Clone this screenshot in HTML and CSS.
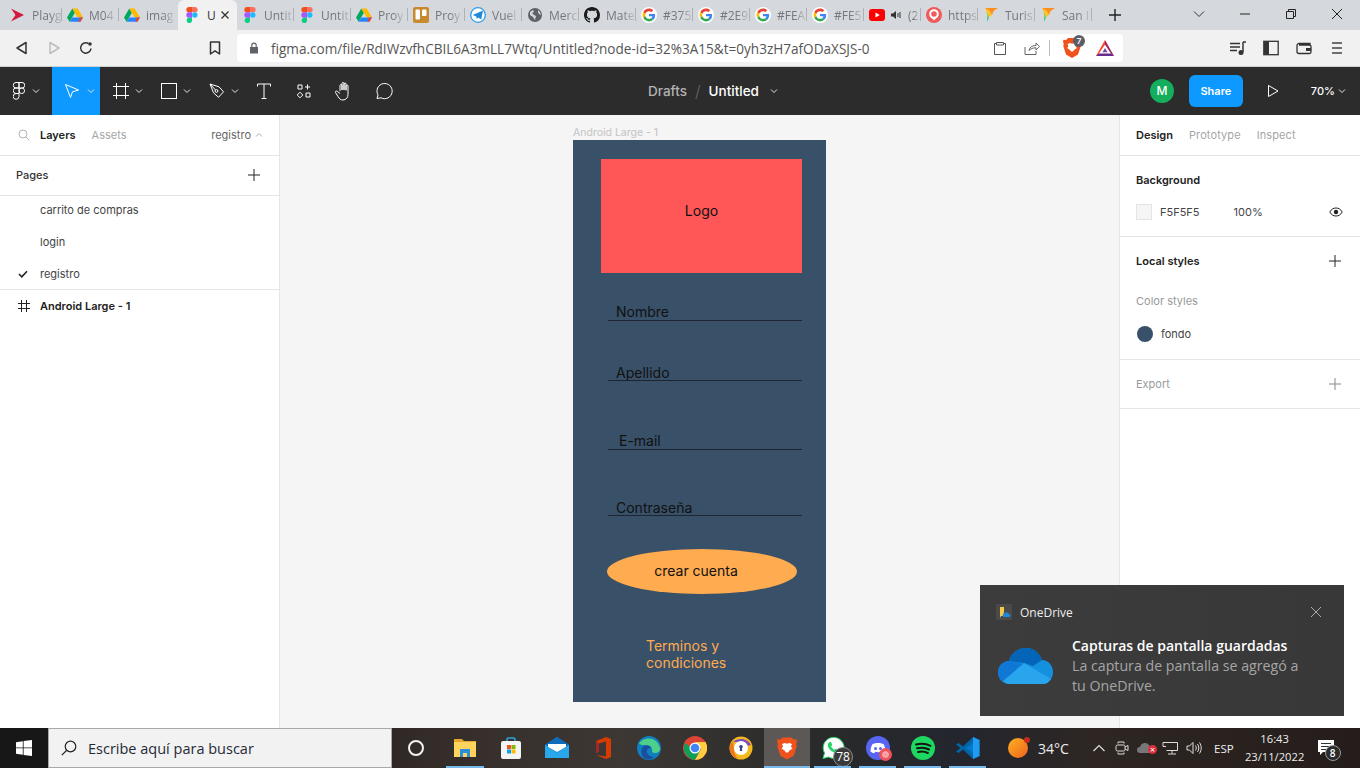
FILE: index.html
```html
<!DOCTYPE html>
<html lang="en">
<head>
    <meta charset="UTF-8">
    <meta name="viewport" content="width=device-width, initial-scale=1.0">
    <title>Untitled - Figma</title>
    <link rel="stylesheet" href="styles.css">
</head>
<body>
    <svg class="sprites" aria-hidden="true">
        <symbol id="fav-drive" viewBox="0 0 16 16">
            <path fill="#00a85d" d="M5.3 1.5 0 10.6l2.6 4.2 5.3-9z"/>
            <path fill="#ffba00" d="M5.3 1.5h5.4l5.3 9.1h-5.3z"/>
            <path fill="#2684fc" d="M2.6 14.8h10.8l2.6-4.2H5.3z"/>
            <path fill="#ea4335" d="M13.4 14.8l2.6-4.2h-3.4l-1 4.2z"/>
        </symbol>
        <symbol id="fav-figma" viewBox="0 0 12 16">
            <path fill="#f24e1e" d="M3 0h3v5.3H3A2.65 2.65 0 0 1 3 0z"/>
            <path fill="#ff7262" d="M6 0h3a2.65 2.65 0 0 1 0 5.3H6z"/>
            <path fill="#a259ff" d="M3 5.3h3v5.4H3a2.7 2.7 0 0 1 0-5.4z"/>
            <circle fill="#1abcfe" cx="8.8" cy="8" r="2.7"/>
            <path fill="#0acf83" d="M3 10.7h3v2.6a2.7 2.7 0 1 1-3-2.6z"/>
        </symbol>
        <symbol id="fav-google" viewBox="-6 -6 60 60">
            <circle cx="24" cy="24" r="30" fill="#fff"/>
            <path fill="#EA4335" d="M24 9.5c3.54 0 6.71 1.22 9.21 3.6l6.85-6.85C35.9 2.38 30.47 0 24 0 14.62 0 6.51 5.38 2.56 13.22l7.98 6.19C12.43 13.72 17.74 9.5 24 9.5z"/>
            <path fill="#4285F4" d="M46.98 24.55c0-1.57-.15-3.09-.38-4.55H24v9.02h12.94c-.58 2.96-2.26 5.48-4.78 7.18l7.73 6c4.51-4.18 7.09-10.36 7.09-17.65z"/>
            <path fill="#FBBC05" d="M10.53 28.59c-.48-1.45-.76-2.99-.76-4.59s.27-3.14.76-4.59l-7.98-6.19C.92 16.46 0 20.12 0 24c0 3.88.92 7.54 2.56 10.78l7.97-6.19z"/>
            <path fill="#34A853" d="M24 48c6.48 0 11.93-2.13 15.89-5.81l-7.73-6c-2.15 1.45-4.92 2.3-8.16 2.3-6.26 0-11.57-4.22-13.47-9.91l-7.98 6.19C6.51 42.62 14.62 48 24 48z"/>
        </symbol>
        <symbol id="fav-flag" viewBox="0 0 16 16">
            <path fill="#ff8f1c" d="M2 1h13l-4.500 3L9 8 6.500 4z"/>
            <path fill="#ffc21c" d="M2 1l4.500 3L9 8l-3 2z"/>
            <path fill="#7ac943" d="M3.500 5 6 10l-1 3z"/>
            <path fill="#1cc7b8" d="M4 10l1.500 1L4.500 15z"/>
        </symbol>
        <symbol id="ic-chevron" viewBox="0 0 8 8">
            <path d="M1 2.5 4 5.5 7 2.5" fill="none" stroke="currentColor"/>
        </symbol>
        <symbol id="ic-plus" viewBox="0 0 12 12">
            <path d="M6 0v12M0 6h12" fill="none" stroke="currentColor"/>
        </symbol>
        <symbol id="ic-brave" viewBox="0 0 18 20">
            <path fill="#f1511b" d="M5 0h8l2 2 2.5-.3L18 3.500l-.8 2.500.6 2-2.800 8.500L9 20l-6-3.500L.3 8l.5-2L0 3.500.5 1.700 3 2z"/>
            <path fill="#fff" d="M4.500 6 7 5l2 .8L11 5l2.500 1-1 2.500 1.500 1.500-3 2-1 1.500h-2l-1-1.500-3-2 1.500-1.500z"/>
        </symbol>
    </svg>

    <div class="tabstrip">
        <div class="tab"><svg class="fav" viewBox="0 0 16 16"><path fill="#d6193f" d="M1 1.500 14 8 1 14.500 5.500 8z"/></svg><span class="tab-title">Playg</span></div>
        <div class="tab"><svg class="fav"><use href="#fav-drive"/></svg><span class="tab-title">M04</span></div>
        <div class="tab no-sep"><svg class="fav"><use href="#fav-drive"/></svg><span class="tab-title">imag</span></div>
        <div class="tab active no-sep"><svg class="fav"><use href="#fav-figma"/></svg><span class="tab-title">U</span><svg class="tab-close" viewBox="0 0 8 8"><path d="M.5.5l7 7M7.500.5l-7 7" fill="none" stroke="#333" stroke-width="1.300"/></svg></div>
        <div class="tab"><svg class="fav"><use href="#fav-figma"/></svg><span class="tab-title">Untit</span></div>
        <div class="tab"><svg class="fav"><use href="#fav-figma"/></svg><span class="tab-title">Untit</span></div>
        <div class="tab"><svg class="fav"><use href="#fav-drive"/></svg><span class="tab-title">Proy</span></div>
        <div class="tab"><svg class="fav" viewBox="0 0 16 16"><rect width="16" height="16" rx="2" fill="#c98a2e"/><rect x="2.500" y="2.500" width="4.500" height="10" rx="1" fill="#fff"/><rect x="9" y="2.500" width="4.500" height="6.500" rx="1" fill="#fff"/></svg><span class="tab-title">Proy</span></div>
        <div class="tab"><svg class="fav" viewBox="0 0 16 16"><circle cx="8" cy="8" r="7.300" fill="#fff" stroke="#2d9be8" stroke-width="1.300"/><path fill="#1e88d9" d="M2.800 8 13 3.600 11.200 12.500 8.200 10.400 6.800 12 6.300 9.500z"/></svg><span class="tab-title">Vuel</span></div>
        <div class="tab"><svg class="fav" viewBox="0 0 16 16"><circle cx="8" cy="8" r="7" fill="#5f6368"/><path fill="#d5d9dd" d="M3 5l3-2 1 2-2 1 2 2 2 1-1 4-2-3-3-2zM11 3l2 2 1 3-2-1-1-2z"/></svg><span class="tab-title">Merc</span></div>
        <div class="tab"><svg class="fav" viewBox="0 0 16 16"><path fill="#1a1a1a" d="M8 0C3.580 0 0 3.580 0 8c0 3.540 2.290 6.530 5.470 7.590.4.070.55-.17.55-.38 0-.19-.01-.82-.01-1.490-2.010.37-2.530-.49-2.690-.94-.09-.23-.48-.94-.82-1.130-.28-.15-.68-.52-.01-.53.630-.01 1.080.58 1.230.82.720 1.210 1.870.87 2.330.66.070-.52.280-.87.510-1.070-1.780-.2-3.640-.89-3.640-3.950 0-.87.310-1.590.820-2.150-.08-.2-.36-1.020.08-2.120 0 0 .67-.21 2.200.82.640-.18 1.320-.27 2-.27.680 0 1.360.09 2 .27 1.530-1.040 2.200-.82 2.200-.82.440 1.100.160 1.920.080 2.120.510.56.820 1.270.820 2.150 0 3.070-1.870 3.750-3.650 3.950.29.25.54.73.54 1.480 0 1.070-.01 1.930-.01 2.200 0 .21.15.46.55.38A8.013 8.013 0 0 0 16 8c0-4.420-3.580-8-8-8z"/></svg><span class="tab-title">Mate</span></div>
        <div class="tab"><svg class="fav"><use href="#fav-google"/></svg><span class="tab-title">#375</span></div>
        <div class="tab"><svg class="fav"><use href="#fav-google"/></svg><span class="tab-title">#2E9</span></div>
        <div class="tab"><svg class="fav"><use href="#fav-google"/></svg><span class="tab-title">#FEA</span></div>
        <div class="tab"><svg class="fav"><use href="#fav-google"/></svg><span class="tab-title">#FE5</span></div>
        <div class="tab tab-audio"><svg class="fav" viewBox="0 0 16 16"><rect y="2" width="16" height="12" rx="3" fill="#f00"/><path fill="#fff" d="M6.500 5.500 10.800 8l-4.300 2.500z"/></svg><svg class="tab-sound" viewBox="0 0 10 10"><path fill="#333" d="M0 3.500h2L5 1v8L2 6.500H0zM6.500 3h1v4h-1zM8.500 2h1v6h-1z"/></svg><span class="tab-title">(2</span></div>
        <div class="tab"><svg class="fav" viewBox="0 0 16 16"><circle cx="8" cy="8" r="8" fill="#ef5a5a"/><circle cx="8" cy="7" r="3.800" fill="none" stroke="#fff" stroke-width="2"/><path fill="#fff" d="M5.500 10.500h5L8 13.500z"/></svg><span class="tab-title">https</span></div>
        <div class="tab"><svg class="fav"><use href="#fav-flag"/></svg><span class="tab-title">Turis</span></div>
        <div class="tab"><svg class="fav"><use href="#fav-flag"/></svg><span class="tab-title">San I</span></div>
        <svg class="new-tab" viewBox="0 0 12 12"><path d="M6 0v12M0 6h12" fill="none" stroke="#222" stroke-width="1.400"/></svg>
        <div class="win-controls">
            <svg class="win-btn" viewBox="0 0 12 12"><path d="M1 3.500 6 8.500 11 3.500" fill="none" stroke="#333"/></svg>
            <svg class="win-btn" viewBox="0 0 12 12"><path d="M1 6h10" fill="none" stroke="#222"/></svg>
            <svg class="win-btn" viewBox="0 0 12 12"><path d="M1.500 3.500h7v7h-7zM3.500 3.500v-2h7v7h-2" fill="none" stroke="#222"/></svg>
            <svg class="win-btn" viewBox="0 0 12 12"><path d="M1 1l10 10M11 1 1 11" fill="none" stroke="#222"/></svg>
        </div>
    </div>

    <div class="addressbar">
        <svg class="nav-btn" viewBox="0 0 16 16"><path d="M12 2.500v11L3 8z" fill="none" stroke="#333" stroke-width="1.500" stroke-linejoin="round"/></svg>
        <svg class="nav-btn" viewBox="0 0 16 16"><path d="M4 2.500v11L13 8z" fill="none" stroke="#bdbdbd" stroke-width="1.500" stroke-linejoin="round"/></svg>
        <svg class="nav-btn" viewBox="0 0 16 16"><path d="M13 8.500A5.200 5.200 0 1 1 10.500 3.500" fill="none" stroke="#333" stroke-width="1.500"/><circle cx="12" cy="4" r="1.800" fill="#333"/></svg>
        <svg class="nav-btn bookmark-btn" viewBox="0 0 16 16"><path d="M3.500 2h9v12L8 10.800 3.500 14z" fill="none" stroke="#333" stroke-width="1.500" stroke-linejoin="round"/></svg>
        <div class="url-box">
            <svg class="lock" viewBox="0 0 10 12"><path fill="#5f6368" d="M1 5h8v6.500H1z"/><path d="M2.800 5V3.300a2.200 2.200 0 0 1 4.400 0V5" fill="none" stroke="#5f6368" stroke-width="1.200"/></svg>
            <span class="url">figma.com/file/RdIWzvfhCBIL6A3mLL7Wtq/Untitled?node-id=32%3A15&amp;t=0yh3zH7afODaXSJS-0</span>
            <svg class="url-ic" viewBox="0 0 14 14"><path d="M3.500 2.500H1.500v11h11v-11h-2M3.500 1.500h7v2.500h-7z" fill="none" stroke="#555"/></svg>
            <svg class="url-ic url-share" viewBox="0 0 16 14"><path d="M1 6v7.500h11V10M5 9.500c.5-3.500 3.500-5 7-5V2l3.500 3.500L12 9V6.800c-3 0-5 .8-7 2.700z" fill="none" stroke="#666"/></svg>
            <span class="url-sep"></span>
            <span class="shield"><svg class="shield-ic"><use href="#ic-brave"/></svg><span class="shield-count">7</span></span>
            <svg class="bat" viewBox="0 0 18 16"><path fill="#662d91" d="M0 16h18l-1.800-2.600H1.800z"/><path fill="#ff4724" d="M9 0 0 16l3-2.600L9 4.500z"/><path fill="#9e1f63" d="M9 0l9 16-3-2.600L9 4.500z"/><path fill="#662d91" d="M9 8l-2.500 4.200h5z" opacity=".9"/></svg>
        </div>
        <div class="browser-tools">
            <svg class="nav-btn" viewBox="0 0 18 16"><path d="M1 3.500h10M1 7h10M1 10.500h7" stroke="#333" stroke-width="1.500" fill="none"/><path d="M14 2v10" stroke="#333" stroke-width="1.500"/><path d="M14 2h3" stroke="#333" stroke-width="1.500"/><circle cx="12" cy="12.500" r="2.500" fill="#333"/></svg>
            <svg class="nav-btn" viewBox="0 0 16 16"><rect x=".8" y="1.300" width="14.400" height="13.400" fill="none" stroke="#333" stroke-width="1.300"/><rect x="1" y="1.500" width="5" height="13" fill="#333"/></svg>
            <svg class="nav-btn" viewBox="0 0 16 16"><path d="M14 5V3.500H3A2 2 0 0 0 1 5.500v6a2 2 0 0 0 2 2h10.500A1.500 1.500 0 0 0 15 12V6.500A1.500 1.500 0 0 0 13.500 5H3" fill="none" stroke="#333" stroke-width="1.300"/><rect x="10" y="8" width="5" height="3" fill="#333"/></svg>
            <svg class="nav-btn" viewBox="0 0 16 16"><path d="M3 3h10M3 8h10M3 13h10" stroke="#444" stroke-width="1.600"/></svg>
        </div>
    </div>

    <div class="toolbar">
        <div class="tool tool-logo">
            <svg class="tool-ic logo-ic" viewBox="0 0 12 18"><path d="M3 .5h3v5.500H3A2.750 2.750 0 0 1 3 .5zM6 .5h3a2.750 2.750 0 0 1 0 5.500H6zM3 6h3v5.500H3A2.750 2.750 0 0 1 3 6zM3 11.500h3v3A2.900 2.900 0 1 1 3 11.500z" fill="none" stroke="#fff"/><circle cx="8.800" cy="8.750" r="2.750" fill="none" stroke="#fff"/></svg>
            <svg class="chev"><use href="#ic-chevron"/></svg>
        </div>
        <div class="tool tool-active">
            <svg class="tool-ic" viewBox="0 0 16 16"><path d="M1.500 1.500 14.500 7 8.500 8.800 6.500 14.500z" fill="none" stroke="#fff"/></svg>
            <svg class="chev"><use href="#ic-chevron"/></svg>
        </div>
        <div class="tool">
            <svg class="tool-ic" viewBox="0 0 16 16"><path d="M3.500 0v16M12.500 0v16M0 3.500h16M0 12.500h16" fill="none" stroke="#fff"/></svg>
            <svg class="chev"><use href="#ic-chevron"/></svg>
        </div>
        <div class="tool">
            <svg class="tool-ic" viewBox="0 0 16 16"><rect x=".5" y=".5" width="15" height="15" fill="none" stroke="#fff"/></svg>
            <svg class="chev"><use href="#ic-chevron"/></svg>
        </div>
        <div class="tool">
            <svg class="tool-ic" viewBox="0 0 16 16"><path d="M1 1l9 2.800 4.500 5-5 5.500-5-4.500zM1 1l5.500 6" fill="none" stroke="#fff"/><circle cx="7.500" cy="8" r="1.400" fill="none" stroke="#fff"/></svg>
            <svg class="chev"><use href="#ic-chevron"/></svg>
        </div>
        <svg class="tool-single" viewBox="0 0 16 16"><path d="M1.500 3.500V1h13v2.500M8 1v14.500M5.500 15.500h5" fill="none" stroke="#fff"/></svg>
        <svg class="tool-single" viewBox="0 0 16 16"><path d="M2 2h4v4H2zM11.500 1.500v5M9 4h5M10 10h4v4h-4zM4 9.200 6.800 12 4 14.800 1.200 12z" fill="none" stroke="#fff"/></svg>
        <svg class="tool-single hand-ic" viewBox="0 0 20 20"><path d="M6 10V4.500a1 1 0 0 1 2 0V9M8 9V2.500a1 1 0 0 1 2 0V9M10 9V3a1 1 0 0 1 2 0v6M12 9.500V5a1 1 0 0 1 2 0v8.500c0 3-2 5.500-5 5.500-2.500 0-3.500-1-5-3.500L1.500 11.500c-.6-1 .8-2 1.700-1.200L6 12.500" fill="none" stroke="#fff"/></svg>
        <svg class="tool-single comment-ic" viewBox="0 0 20 20"><path d="M3 17.500l1-3.600A7.600 7.600 0 1 1 7 16.800z" fill="none" stroke="#fff"/></svg>
        <div class="doc-title">
            <span class="doc-folder">Drafts</span>
            <span class="doc-slash">/</span>
            <span class="doc-name">Untitled</span>
            <svg class="chev"><use href="#ic-chevron"/></svg>
        </div>
        <div class="toolbar-right">
            <span class="avatar">M</span>
            <button class="share-btn">Share</button>
            <svg class="play-ic" viewBox="0 0 12 14"><path d="M1.500 1.500v11L11 7z" fill="none" stroke="#fff"/></svg>
            <span class="zoom-level">70%</span>
            <svg class="chev"><use href="#ic-chevron"/></svg>
        </div>
    </div>

    <div class="workspace">
        <aside class="left-panel">
            <div class="panel-tabs">
                <svg class="search-ic" viewBox="0 0 12 12"><circle cx="5" cy="5" r="4" fill="none" stroke="#b3b3b3"/><path d="M8 8l3.500 3.500" stroke="#b3b3b3"/></svg>
                <span class="tab-on">Layers</span>
                <span class="tab-off">Assets</span>
                <span class="page-picker">registro</span>
                <svg class="picker-chev" viewBox="0 0 8 8"><path d="M1 5.500 4 2.500 7 5.500" fill="none" stroke="#aaa"/></svg>
            </div>
            <div class="pages-head">
                <span>Pages</span>
                <svg class="plus"><use href="#ic-plus"/></svg>
            </div>
            <ul class="page-list">
                <li>carrito de compras</li>
                <li>login</li>
                <li class="page-current"><svg class="check" viewBox="0 0 10 8"><path d="M1 4l2.800 2.800L9 1.200" fill="none" stroke="#222" stroke-width="1.600"/></svg>registro</li>
            </ul>
            <div class="layer-row">
                <svg class="layer-ic" viewBox="0 0 12 12"><path d="M3.500 0v12M8.500 0v12M0 3.500h12M0 8.500h12" fill="none" stroke="#222"/></svg>
                Android Large - 1
            </div>
        </aside>

        <main class="canvas">
            <div class="frame-label">Android Large - 1</div>
            <div class="frame">
                <div class="logo-box">Logo</div>
                <div class="field field-nombre"><span>Nombre</span></div>
                <div class="field field-apellido"><span>Apellido</span></div>
                <div class="field field-email"><span>E-mail</span></div>
                <div class="field field-pass"><span>Contraseña</span></div>
                <div class="create-btn"><span>crear cuenta</span></div>
                <div class="terms">Terminos y<br>condiciones</div>
            </div>
        </main>

        <aside class="right-panel">
            <div class="design-tabs">
                <span class="tab-on">Design</span>
                <span class="tab-off">Prototype</span>
                <span class="tab-off">Inspect</span>
            </div>
            <section class="section section-bg">
                <h3>Background</h3>
                <div class="bg-row">
                    <span class="swatch"></span>
                    <span class="bg-hex">F5F5F5</span>
                    <span class="bg-pct">100%</span>
                    <svg class="eye" viewBox="0 0 14 10"><path d="M.8 5C2.500 2 4.500 1 7 1s4.500 1 6.200 4C11.500 8 9.500 9 7 9S2.500 8 .8 5z" fill="none" stroke="#222"/><circle cx="7" cy="5" r="2.200" fill="#222"/></svg>
                </div>
            </section>
            <section class="section section-styles">
                <div class="section-head">
                    <h3>Local styles</h3>
                    <svg class="plus"><use href="#ic-plus"/></svg>
                </div>
                <div class="muted-label">Color styles</div>
                <div class="style-row"><span class="style-dot"></span>fondo</div>
            </section>
            <section class="section section-export">
                <span class="muted-label">Export</span>
                <svg class="plus plus-muted"><use href="#ic-plus"/></svg>
            </section>
        </aside>
    </div>

    <div class="taskbar">
        <div class="start-btn"><svg class="start-ic" viewBox="0 0 16 16"><path fill="#fff" d="M0 2.200 6.800 1.200V7.500H0zM7.600 1.100 16 0v7.500H7.600zM0 8.300h6.800v6.500L0 13.800zM7.600 8.300H16V16l-8.400-1.100z"/></svg></div>
        <div class="search-box">
            <svg class="task-search-ic" viewBox="0 0 16 16"><circle cx="9.500" cy="6.500" r="5.300" fill="none" stroke="#222" stroke-width="1.200"/><path d="M5.500 10.500 .8 15.200" stroke="#222" stroke-width="1.200"/></svg>
            <span>Escribe aquí para buscar</span>
        </div>
        <div class="cortana"><span class="cortana-ring"></span></div>
        <div class="task-item running"><svg class="app-ic" viewBox="0 0 24 24"><path fill="#e8a62b" d="M1 3h8l2 2h12v3H1z"/><path fill="#ffd45e" d="M1 6h22v15H1z"/><path fill="#2a8fd8" d="M7 13h10v8h-3v-4h-4v4H7z"/></svg></div>
        <div class="task-item"><svg class="app-ic" viewBox="0 0 24 24"><path d="M8 6V3.500a1.500 1.500 0 0 1 1.500-1.500h5A1.500 1.500 0 0 1 16 3.500V6" fill="none" stroke="#2aa5e0" stroke-width="1.600"/><rect x="2" y="5" width="20" height="18" rx="2" fill="#f4f4f4"/><rect x="8" y="9" width="4" height="4" fill="#f25022"/><rect x="12.500" y="9" width="4" height="4" fill="#7fba00"/><rect x="8" y="13.500" width="4" height="4" fill="#00a4ef"/><rect x="12.500" y="13.500" width="4" height="4" fill="#ffb900"/></svg></div>
        <div class="task-item"><svg class="app-ic" viewBox="0 0 24 24"><path fill="#1490df" d="M0 9 12 1l12 8v13H0z"/><path fill="#0f6cbd" d="M0 9l12-8 12 8-12 7z"/><path fill="#fff" d="M3 8h18v3l-9 5-9-5z"/><path fill="#28a8ea" d="M0 9l12 8 12-8v13H0z"/></svg></div>
        <div class="task-item"><svg class="app-ic" viewBox="0 0 24 24"><path fill="#d83b01" d="M5 5l10-4 5 2v18l-5 2-10-4 10 1.500V5.500L8 7.500v8L5 17z"/><path fill="#a4262c" d="M5 5l3 2.500v8L5 17z"/></svg></div>
        <div class="task-item"><svg class="app-ic" viewBox="0 0 24 24"><circle cx="12" cy="12" r="12" fill="#0f7fbf"/><path fill="#4fd08a" d="M2 8c3-7 18-9 21 4 .5 3-2 5-5 5-2 0-3-1-3-2 1-3-2-6-6-6-3 0-5 0-7-1z"/><path fill="#1b4f9e" d="M9 23c-5-2-6-9-3-12 2-2 7-2 8 1-3 0-5 2-4 5 1 2 4 4 7 4-2 2-5 3-8 2z"/></svg></div>
        <div class="task-item"><svg class="app-ic" viewBox="0 0 24 24"><circle cx="12" cy="12" r="12" fill="#db4437"/><path fill="#0f9d58" d="M12 24 18 13l-6-1-6-2-4-3A12 12 0 0 0 12 24z"/><path fill="#ffcd40" d="M12 6h10.500A12 12 0 0 1 12 24l6-11z"/><circle cx="12" cy="12" r="5.500" fill="#fff"/><circle cx="12" cy="12" r="4.300" fill="#4285f4"/></svg></div>
        <div class="task-item"><svg class="app-ic" viewBox="0 0 24 24"><circle cx="12" cy="12" r="11.500" fill="#f5b81c"/><path fill="#7b4bc4" d="M4 6a11.500 11.500 0 0 1 18 3l-6 1-5-4z"/><path fill="#f0761e" d="M.5 12C1 8 3 6 4 6c1 5 0 12 5 16.500C4 22 .5 17 .5 12z"/><circle cx="12" cy="12" r="7" fill="#fff"/><circle cx="12" cy="10.800" r="1.800" fill="#33408f"/><path fill="#33408f" d="M11.200 11h1.600l.4 4h-2.400z"/></svg></div>
        <div class="task-item active running"><svg class="app-ic brave-task"><use href="#ic-brave"/></svg></div>
        <div class="task-item narrow running">
            <svg class="app-ic" viewBox="0 0 24 24"><path d="M2 22.500l1.500-5.500A10.500 10.500 0 1 1 7.500 21z" fill="#fff" stroke="#25d366" stroke-width="1"/><path fill="#25d366" d="M8 6.500c1-1 2-.8 2.300 0l.8 2c.2.500-.8 1.500-1 2 .8 1.500 2 2.600 3.500 3.300.5-.3 1.300-1.300 1.800-1l2 1c.6.500.4 1.500-.2 2.200-1.200 1.200-3 1.200-5.200 0-2.500-1.400-4-3-5-5.300C6.500 9.200 7 7.500 8 6.500z"/></svg>
            <span class="task-badge">78</span>
        </div>
        <div class="task-item narrow running">
            <svg class="app-ic" viewBox="0 0 24 24"><circle cx="12" cy="12" r="12" fill="#5865f2"/><path fill="#fff" d="M6.500 8c3-1.500 8-1.500 11 0 1.500 2.500 2 5 2 7.500-1.200 1-2.500 1.500-3.800 1.700l-.9-1.400c-2.300.5-3.300.5-5.600 0l-.9 1.400C7 17 5.700 16.500 4.500 15.500 4.500 13 5 10.500 6.500 8z"/><circle cx="9.500" cy="12.500" r="1.500" fill="#5865f2"/><circle cx="14.500" cy="12.500" r="1.500" fill="#5865f2"/></svg>
            <span class="rec-badge"></span>
        </div>
        <div class="task-item narrow running"><svg class="app-ic" viewBox="0 0 24 24"><circle cx="12" cy="12" r="12" fill="#1ed760"/><path d="M5 8.500c5-1.300 10-1 14.500 1.300M6 12.300c4-1 8.500-.7 12 1.200M7 16c3.500-.8 7-.5 9.800 1" fill="none" stroke="#141414" stroke-width="2" stroke-linecap="round"/></svg></div>
        <div class="task-item narrow running"><svg class="app-ic" viewBox="0 0 24 24"><path fill="#0065a9" d="M17 1 23.500 4v16L17 23 7 13.500 2.500 17 0 15.500 4.500 12 0 8.500 2.500 7 7 10.500z"/><path fill="#1f9cf0" d="M17 1 23.500 4v16L17 23z"/><path fill="#007acc" d="M17 7 10 12l7 5z"/></svg></div>
        <div class="tray">
            <span class="weather"><span class="weather-sun"></span><span class="weather-dot"></span></span>
            <span class="temp">34°C</span>
            <svg class="tray-ic tray-caret" viewBox="0 0 12 8"><path d="M.5 7 6 1.500 11.500 7" fill="none" stroke="#ddd" stroke-width="1.200"/></svg>
            <svg class="tray-ic" viewBox="0 0 14 16"><path d="M3 3.500V2h6v1.500M3 12.500V14h6v-1.500" fill="none" stroke="#ddd"/><rect x="1" y="5" width="9" height="6" rx="1.500" fill="none" stroke="#ddd"/><path d="M10 7l3-1.500v5L10 9" fill="none" stroke="#ddd"/></svg>
            <span class="tray-cloud"><svg viewBox="0 0 16 12"><path fill="#777" d="M3 11a3 3 0 0 1 0-6 5 5 0 0 1 9.500-1A3.500 3.500 0 0 1 13 11z"/></svg><span class="cloud-err">×</span></span>
            <svg class="tray-ic tray-net" viewBox="0 0 16 14"><path d="M4.500 1.500H15.500v8H4.500M6 1.500H1v4h3M10 9.500v3M6 13h8" fill="none" stroke="#ddd"/></svg>
            <svg class="tray-ic" viewBox="0 0 16 14"><path d="M1 5h2.500L7 1.500v11L3.500 9H1zM9.500 4.500c1 1.500 1 3.500 0 5M11.500 3c1.700 2.500 1.700 5.500 0 8M13.500 1.500c2.300 3.500 2.300 7.500 0 11" fill="none" stroke="#ddd"/></svg>
            <span class="tray-lang">ESP</span>
            <span class="clock"><span>16:43</span><span>23/11/2022</span></span>
            <span class="notif">
                <svg viewBox="0 0 16 16"><path fill="#fff" d="M0 0h16v12H5l-3 3v-3H0z"/><path d="M3 3.500h10M3 6.500h10M3 9.500h7" stroke="#333"/></svg>
                <span class="notif-count">8</span>
            </span>
        </div>
    </div>

    <div class="toast">
        <div class="toast-head">
            <svg class="toast-app" viewBox="0 0 16 16"><rect width="16" height="16" fill="#4a4a4a"/><path fill="#f5c94c" d="M4 3h4v9H5l-1 2z"/><path fill="#1e88d9" d="M7 12a2 2 0 0 1 2-3 2.500 2.500 0 0 1 4 1 1.500 1.500 0 0 1 0 3H7z"/></svg>
            <span>OneDrive</span>
            <svg class="toast-close" viewBox="0 0 12 12"><path d="M1 1l10 10M11 1 1 11" fill="none" stroke="#aaa"/></svg>
        </div>
        <div class="toast-body">
            <svg class="toast-cloud" viewBox="0 0 56 36">
                <path fill="#1490df" d="M12 36C4 36 0 30 0 24 0 18 5 13 11 13 13 5 20 0 28 0c7 0 13 4 16 12 6 0 11 5 11 12 0 6-4 12-10 12z"/>
                <path fill="#0f78d4" d="M12 36C4 36 0 30 0 24 0 18 5 13 11 13l15 3z"/>
                <path fill="#0364b8" d="M11 13C13 5 20 0 28 0c7 0 13 4 16 12L35 18l-9-3z"/>
                <path fill="#29a5ee" d="M12 36C9 36 7 35 5 33l21-18 27 16c-2 3-5 5-8 5z"/>
            </svg>
            <div class="toast-text">
                <div class="toast-title">Capturas de pantalla guardadas</div>
                <div class="toast-desc">La captura de pantalla se agregó a<br>tu OneDrive.</div>
            </div>
        </div>
    </div>
</body>
</html>
```

FILE: styles.css
```css
* { margin: 0; padding: 0; box-sizing: border-box; }
body { width: 1360px; height: 768px; overflow: hidden; position: relative; display: flex; flex-direction: column;
       font-family: Inter, Arial, sans-serif; background: #f5f5f5; }
svg { display: block; flex: none; }
.sprites { position: absolute; width: 0; height: 0; }

/* browser chrome */
.tabstrip { height: 30px; background: #d5d9dd; display: flex; padding-left: 5px; font-family: "Open Sans", sans-serif; }
.tab { flex: 0 0 57px; height: 30px; position: relative; display: flex; align-items: center; padding-left: 5px; }
.tab::after { content: ""; position: absolute; right: 0; top: 8px; height: 13px; width: 1px; background: #aeb2b7; }
.tab.no-sep::after { display: none; }
.tab.active { flex-basis: 59px; margin-left: 2px; background: #f1f1f2; border-radius: 6px 6px 0 0; padding-left: 6px; }
.fav { width: 16px; height: 16px; }
.tab-title { margin-left: 6px; font-size: 12px; color: #74777c; white-space: nowrap;
             -webkit-mask-image: linear-gradient(to right, #000 60%, rgba(0,0,0,.25) 100%); mask-image: linear-gradient(to right, #000 60%, rgba(0,0,0,.25) 100%); }
.tab.active .tab-title { margin-left: 7px; color: #333; -webkit-mask-image: none; mask-image: none; }
.tab-close { width: 8px; height: 8px; margin-left: 5px; }
.tab-sound { width: 10px; height: 10px; margin-left: 6px; }
.tab-audio .tab-title { margin-left: 7px; }
.new-tab { width: 12px; height: 12px; margin: 9px 0 0 17px; }
.win-controls { margin-left: auto; display: flex; }
.win-btn { width: 12px; height: 12px; margin: 8px 17px 0; }

.addressbar { height: 37px; background: #f1f1f2; border-bottom: 1px solid #d0d0d0; display: flex; align-items: center; padding-left: 6px; }
.nav-btn { width: 32px; height: 16px; }
.bookmark-btn { margin-left: 97px; }
.url-box { width: 886px; height: 28px; margin-left: 6px; background: #fff; border-radius: 4px; display: flex; align-items: center; padding-left: 12px; }
.lock { width: 10px; height: 12px; }
.url { margin-left: 12px; font-family: "Open Sans", sans-serif; font-size: 13.57px; color: #555; white-space: nowrap; width: 722px; }
.url-ic { width: 14px; height: 14px; }
.url-share { width: 16px; margin-left: 17px; }
.url-sep { width: 1px; height: 16px; background: #bbb; margin: 0 13px 0 9px; }
.shield { position: relative; width: 24px; height: 20px; }
.shield-ic { width: 18px; height: 20px; }
.shield-count { position: absolute; left: 10px; top: -3px; width: 12px; height: 12px; border-radius: 50%; background: #5b5e68; color: #fff;
                font-size: 8px; font-weight: 600; line-height: 12px; text-align: center; }
.bat { width: 18px; height: 16px; margin-left: 9px; }
.browser-tools { display: flex; margin-left: 99px; gap: 1px; }

/* figma toolbar */
.toolbar { height: 48px; background: #2c2c2c; color: #fff; display: flex; align-items: center; }
.tool { width: 48px; height: 48px; display: flex; align-items: center; padding-left: 13px; }
.tool-logo { width: 52px; }
.tool-active { background: #0d99ff; padding-left: 12px; }
.tool-ic { width: 16px; height: 16px; }
.logo-ic { width: 12px; height: 18px; }
.chev { width: 8px; height: 8px; margin-left: 6px; color: #e6e6e6; }
.tool-logo .chev { margin-left: 7px; }
.tool-active .chev { margin-left: 7px; }
.tool-single { width: 16px; height: 16px; margin: 0 12px; }
.hand-ic, .comment-ic { width: 20px; height: 20px; margin: 0 10px; }
.doc-title { margin-left: 244px; display: flex; align-items: center; font-size: 13.5px; font-weight: 500; }
.doc-title .chev { margin-left: 11px; }
.doc-folder { color: #b3b3b3; }
.doc-slash { color: #666; margin: 0 8px; font-size: 16px; font-weight: 300; }
.toolbar-right { margin-left: auto; display: flex; align-items: center; padding-right: 14px; }
.avatar { width: 24px; height: 24px; border-radius: 50%; background: #14ae5c; font-size: 12px; font-weight: 500; line-height: 24px; text-align: center; }
.share-btn { width: 54px; height: 32px; margin-left: 15px; background: #0d99ff; color: #fff; border: none; border-radius: 6px; font-family: Inter, sans-serif; font-size: 11px; font-weight: 600; }
.play-ic { width: 12px; height: 14px; margin-left: 24px; }
.zoom-level { margin-left: 32px; font-size: 11px; font-weight: 500; }
.toolbar-right .chev { margin-left: 3px; }

/* main area */
.workspace { height: 613px; display: grid; grid-template-columns: 280px 1fr 241px; font-size: 11px; color: #333; }
.left-panel { background: #fff; border-right: 1px solid #e5e5e5; }
.panel-tabs { height: 41px; border-bottom: 1px solid #e5e5e5; display: flex; align-items: center; padding: 0 16px 0 18px; }
.search-ic { width: 12px; height: 12px; }
.tab-on { font-weight: 600; color: #222; }
.tab-off { color: #a6a6a6; }
.panel-tabs .tab-on { margin-left: 10px; }
.panel-tabs .tab-off { margin-left: 16px; }
.page-picker { margin-left: auto; color: #666; }
.picker-chev { width: 8px; height: 8px; margin-left: 4px; }
.pages-head { height: 40px; border-bottom: 1px solid #e5e5e5; display: flex; align-items: center; justify-content: space-between; padding: 0 19px 2px 16px; font-weight: 500; }
.plus { width: 12px; height: 12px; color: #222; }
.plus-muted { color: #888; }
.page-list { list-style: none; height: 94px; border-bottom: 1px solid #e5e5e5; display: flex; flex-direction: column; gap: 4px; }
.page-list li { height: 28px; line-height: 28px; padding-left: 40px; color: #444; position: relative; }
.check { position: absolute; left: 18px; top: 10px; width: 10px; height: 8px; }
.layer-row { height: 32px; display: flex; align-items: center; padding-left: 18px; font-weight: 600; color: #222; }
.layer-ic { width: 12px; height: 12px; margin-right: 10px; }

.canvas { position: relative; background: #f5f5f5; }
.frame-label { position: absolute; left: 293px; top: 11px; font-size: 10.5px; color: #c4c4c4; }
.frame { position: absolute; left: 293px; top: 25px; width: 253px; height: 562px; background: #385068; color: #111; font-size: 14px; }
.logo-box { position: absolute; left: 28px; top: 19px; width: 201px; height: 114px; padding-bottom: 12px; background: #ff5757; display: flex; align-items: center; justify-content: center; }
.field { position: absolute; left: 35px; width: 194px; height: 24px; border-bottom: 1px solid #1e2530; line-height: 24px; padding-left: 8px; white-space: nowrap; }
.field-nombre { top: 157px; }
.field-apellido { top: 217px; }
.field-email { top: 286px; padding-left: 11px; }
.field-pass { top: 352px; }
.field span { position: relative; top: 3px; }
.field-apellido span, .field-pass span { top: 4px; }
.create-btn { position: absolute; left: 34px; top: 409px; width: 190px; height: 45px; border-radius: 50%; background: #ffab50; display: flex; align-items: center; justify-content: center; padding: 0 12px 2px 0; }
.terms { position: absolute; left: 73px; top: 497px; line-height: 17px; color: #ffab50; }

.right-panel { background: #fff; border-left: 1px solid #e5e5e5; }
.design-tabs { height: 41px; border-bottom: 1px solid #e5e5e5; display: flex; align-items: center; padding-left: 16px; gap: 16px; }
.design-tabs .tab-off { letter-spacing: .1px; }
.section { border-bottom: 1px solid #e5e5e5; padding: 16px 24px 16px 16px; }
h3 { font-size: 11px; font-weight: 600; color: #222; line-height: 16px; }
.section-bg { height: 81px; }
.bg-row { display: flex; align-items: center; height: 16px; margin-top: 16px; color: #444; }
.swatch { width: 16px; height: 16px; background: #f5f5f5; border: 1px solid #e5e5e5; }
.bg-hex { margin-left: 8px; }
.bg-pct { margin-left: 34px; }
.eye { width: 14px; height: 10px; margin-left: auto; margin-right: -7px; }
.section-styles { height: 123px; }
.section-head { display: flex; justify-content: space-between; align-items: center; }
.section-head .plus { margin-right: -5px; }
.muted-label { color: #999; line-height: 16px; margin-top: 24px; }
.style-row { display: flex; align-items: center; margin-top: 17px; height: 16px; color: #444; }
.style-dot { width: 16px; height: 16px; margin: 0 8px 0 1px; border-radius: 50%; background: #385068; }
.section-export { height: 49px; display: flex; align-items: center; justify-content: space-between; padding-top: 0; padding-bottom: 0; }
.section-export .muted-label { margin-top: 0; }
.section-export .plus { margin-right: -5px; }

/* windows taskbar */
.taskbar { height: 40px; display: flex; align-items: center; color: #eee; font-family: "Open Sans", sans-serif;
           background: linear-gradient(to right, #171717 0, #1e1b1a 300px, #332b28 420px, #3d3834 620px, #2a2b2a 800px, #24262f 960px, #2e2622 1100px, #241d1b 1360px); }
.start-btn { width: 48px; height: 40px; display: flex; align-items: center; justify-content: center; }
.start-ic { width: 16px; height: 16px; }
.search-box { width: 344px; height: 40px; background: #f2f2f2; border: 1px solid #a8a8a8; display: flex; align-items: center; padding-left: 12px; color: #1f2a36; font-size: 14.5px; }
.task-search-ic { width: 16px; height: 16px; margin-right: 11px; }
.cortana { width: 50px; padding-right: 2px; display: flex; justify-content: center; }
.cortana-ring { width: 16px; height: 16px; border: 2.5px solid #f2f2f2; border-radius: 50%; }
.task-item { width: 46px; height: 40px; display: flex; align-items: center; justify-content: center; position: relative; }
.task-item.narrow { width: 45px; }
.task-item.active { background: #5c5856; }
.running::after { content: ""; position: absolute; left: 4px; right: 4px; bottom: 0; height: 2px; background: #76b9ed; }
.task-item.active::after { left: 0; right: 0; }
.app-ic { width: 24px; height: 24px; }
.brave-task { width: 20px; height: 23px; }
.task-badge { position: absolute; left: 23px; top: 19px; width: 20px; height: 20px; border-radius: 50%; background: #3a3a3a; border: 1px solid #8c8c8c; color: #fff; font-size: 12px; line-height: 18px; text-align: center; }
.rec-badge { position: absolute; left: 24px; top: 20px; width: 13px; height: 13px; border-radius: 50%; background: #f0535a; border: 3px solid #f0535a; box-shadow: inset 0 0 0 3px #f5a5a8; }
.tray { flex: 1; display: flex; align-items: center; padding-left: 18px; }
.weather { position: relative; width: 20px; height: 20px; }
.weather-sun { display: block; width: 20px; height: 20px; border-radius: 50%; background: linear-gradient(135deg, #fdb022, #f0641e); }
.weather-dot { position: absolute; right: -2px; top: -1px; width: 6px; height: 6px; border-radius: 50%; background: #c42b1c; }
.temp { margin-left: 10px; font-size: 14px; width: 55px; }
.tray-ic { width: 16px; height: 16px; margin-right: 8px; }
.tray-caret { width: 12px; height: 8px; margin-right: 9px; }
.tray-cloud { position: relative; width: 16px; height: 12px; margin-right: 9px; margin-left: -1px; }
.cloud-err { position: absolute; right: -4px; top: 3px; width: 9px; height: 9px; border-radius: 50%; background: #d9303c; color: #fff; font-size: 9px; line-height: 9px; text-align: center; }
.tray-lang { margin-left: 4px; font-size: 11.5px; }
.clock { width: 62px; margin-left: 10px; display: flex; flex-direction: column; align-items: center; font-size: 11.2px; line-height: 18px; }
.notif { position: relative; width: 16px; height: 16px; margin-left: 12px; }
.notif svg { width: 16px; height: 16px; }
.notif-count { position: absolute; left: 7px; top: 5px; width: 16px; height: 16px; border-radius: 50%; background: #2b2b2b; border: 1px solid #999; color: #fff; font-size: 10px; font-weight: 600; line-height: 14px; text-align: center; }

/* notification */
.toast { position: absolute; left: 980px; top: 585px; width: 364px; height: 131px; background: linear-gradient(to right, #3c3c3c, #383838); color: #fff; font-family: "Open Sans", sans-serif; padding: 19px 16px 0 16px; }
.toast-head { display: flex; align-items: center; height: 16px; font-size: 12px; color: #eee; }
.toast-app { width: 16px; height: 16px; margin-right: 8px; }
.toast-close { width: 12px; height: 12px; margin-left: auto; margin-right: 6px; }
.toast-body { display: flex; margin-top: 16px; padding-left: 2px; }
.toast-cloud { width: 56px; height: 36px; margin-top: 12px; }
.toast-title { font-size: 14px; font-weight: 600; line-height: 20px; }
.toast-text { margin-left: 18px; }
.toast-desc { font-size: 14.2px; line-height: 20px; color: #a6a6a6; }
```
